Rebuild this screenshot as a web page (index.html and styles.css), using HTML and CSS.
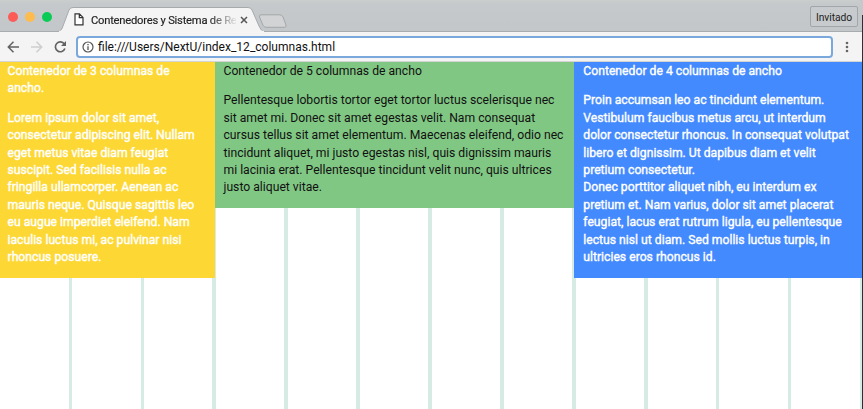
FILE: index.html
```html
<!DOCTYPE html>
<html lang="es">
<head>
<meta charset="utf-8">
<title>Contenedores y Sistema de Rejillas</title>
<link rel="stylesheet" href="styles.css">
</head>
<body>
<div class="window">
  <header class="tabbar">
    <div class="lights"><i class="red"></i><i class="amber"></i><i class="green"></i></div>
    <div class="tab">
      <svg class="tab-shape" width="210" height="25" viewBox="0 0 210 25"><path d="M0 24.5C3 24 4 22 5 19L11 3Q12 .5 15 .5H190Q193 .5 194 3L201 19Q203 24 206 24.5V25H0Z" fill="#f4f4f4" stroke="#a7aaab" stroke-width="1"/><path d="M1 24.5H206" stroke="#f4f4f4" stroke-width="1.5"/></svg>
      <svg class="page" width="10" height="13" viewBox="0 0 10 13"><path d="M1 .8H5.4L9 4.4V11.8H1ZM5.3 1V4.6H9" fill="#fff" stroke="#333" stroke-width="1.2"/></svg>
      <span class="tab-title">Contenedores y Sistema de Re</span>
      <svg class="close" width="8" height="8" viewBox="0 0 8 8"><path d="M1 1L7 7M7 1L1 7" stroke="#555" stroke-width="1.5"/></svg>
    </div>
    <svg class="new-tab" width="30" height="15" viewBox="0 0 30 15"><path d="M3 .8H22Q24 .8 25 3L28 11Q28.5 13.3 26.5 13.3H8Q6 13.3 5 11.3L1.5 3Q1 .8 3 .8Z" fill="#d1d3d4" stroke="#a4a7a9"/></svg>
    <button class="guest">Invitado</button>
  </header>
  <nav class="toolbar">
    <svg class="nav-icons" width="76" height="30" viewBox="0 0 76 30" fill="none" stroke-width="1.5"><path d="M19 15H8.500M13.500 9.700L8.300 15L13.500 20.300" stroke="#626262"/><path d="M31 15H41.500M36.500 9.700L41.700 15L36.500 20.300" stroke="#cecece"/><path d="M64.300 12A4.900 4.900 0 1 0 64.900 16.500" stroke="#626262" stroke-width="1.700"/><path d="M66 9V14H61Z" fill="#626262"/></svg>
    <div class="address">
      <svg width="12" height="12" viewBox="0 0 12 12"><circle cx="6" cy="6" r="5" fill="none" stroke="#555" stroke-width="1.2"/><path d="M6 5.200V9M6 3V4.300" stroke="#555" stroke-width="1.3"/></svg>
      <span>file:///Users/NextU/index_12_columnas.html</span>
    </div>
    <svg class="menu" width="4" height="14" viewBox="0 0 4 14" fill="#666"><circle cx="2" cy="3" r="1.3"/><circle cx="2" cy="7" r="1.3"/><circle cx="2" cy="11" r="1.3"/></svg>
  </nav>
  <main class="grid">
    <section class="col three">
      <p>Contenedor de 3 columnas de<br>ancho.</p>
      <p>Lorem ipsum dolor sit amet,<br>consectetur adipiscing elit. Nullam<br>eget metus vitae diam feugiat<br>suscipit. Sed facilisis nulla ac<br>fringilla ullamcorper. Aenean ac<br>mauris neque. Quisque sagittis leo<br>eu augue imperdiet eleifend. Nam<br>iaculis luctus mi, ac pulvinar nisi<br>rhoncus posuere.</p>
    </section>
    <section class="col five">
      <p>Contenedor de 5 columnas de ancho</p>
      <p>Pellentesque lobortis tortor eget tortor luctus scelerisque nec<br>sit amet mi. Donec sit amet egestas velit. Nam consequat<br>cursus tellus sit amet elementum. Maecenas eleifend, odio nec<br>tincidunt aliquet, mi justo egestas nisl, quis dignissim mauris<br>mi lacinia erat. Pellentesque tincidunt velit nunc, quis ultrices<br>justo aliquet vitae.</p>
    </section>
    <section class="col four">
      <p>Contenedor de 4 columnas de ancho</p>
      <p>Proin accumsan leo ac tincidunt elementum.<br>Vestibulum faucibus metus arcu, ut interdum<br>dolor consectetur rhoncus. In consequat volutpat<br>libero et dignissim. Ut dapibus diam et velit<br>pretium consectetur.<br>Donec porttitor aliquet nibh, eu interdum ex<br>pretium et. Nam varius, dolor sit amet placerat<br>feugiat, lacus erat rutrum ligula, eu pellentesque<br>lectus nisl ut diam. Sed mollis luctus turpis, in<br>ultricies eros rhoncus id.</p>
    </section>
  </main>
</div>
</body>
</html>
```
FILE: styles.css
```css
* { box-sizing: border-box; }
body { margin: 0; background: #fff; font-family: Roboto, sans-serif; overflow: hidden; }
.window { height: 409px; display: flex; flex-direction: column; background: linear-gradient(#263238, #263238) 862px 15px / 1px 394px no-repeat #c5c8ca; }
.tabbar { height: 32px; display: flex; align-items: flex-start; background: linear-gradient(#cbcecd, #c5c9cb 4px, #c3c7c9); border-bottom: 1px solid #a9acad; border-radius: 0 5px 0 0; margin-right: 1px; }
.lights { display: flex; gap: 7px; padding: 12px 0 0 8px; width: 58px; }
.lights i { width: 10px; height: 10px; border-radius: 50%; flex: none; }
.red { background: #fc5b57; }
.amber { background: #fdbc4d; }
.green { background: #0acb55; }
.tab { width: 206px; height: 25px; margin-top: 7px; position: relative; display: flex; align-items: center; padding-left: 16px; flex: none; }
.tab-shape { position: absolute; left: 0; top: 0; }
.page, .tab-title, .close { position: relative; flex: none; }
.tab-title { width: 145px; margin-left: 7px; white-space: nowrap; font-size: 11.2px; letter-spacing: -.22px; line-height: 16px; top: 1px; color: #222; -webkit-text-stroke: .15px #222; -webkit-mask-image: linear-gradient(90deg, #000 118px, transparent 147px); mask-image: linear-gradient(90deg, #000 118px, transparent 147px); }
.close { margin-left: 4px; }
.new-tab { margin: 14px 0 0 -6px; position: relative; }
.guest { margin: 6px 4px 0 auto; width: 48px; height: 21px; padding: 1px 0 0; border: 1px solid #a3a6a8; border-radius: 2px; background: #c8cbcd; font: 10.3px Roboto, sans-serif; letter-spacing: -.1px; color: #222; }
.toolbar { height: 30px; display: flex; align-items: center; background: #f4f4f4; border-bottom: 1px solid #d4d4d4; margin-right: 1px; }
.nav-icons { flex: none; }
.address { width: 757px; height: 22px; display: flex; align-items: center; gap: 4.5px; padding-left: 3.5px; border: 2px solid #7ba8dc; border-radius: 4px; background: #fff; font-size: 12.03px; color: #111; }
.menu { margin-left: 12px; }
.grid { width: 862px; flex: 1; display: grid; grid-template-columns: 215px 359.3px 1fr; align-items: start; background: repeating-linear-gradient(90deg, #fff 0 68.6px, #d5ebe3 68.6px 71.95px); }
.col { padding: .7px 8px 11.5px; font-size: 12.2px; line-height: 17.42px; white-space: nowrap; }
.col p { margin: 0 0 12.2px; }
.col p:last-child { margin-bottom: 0; }
.three { background: #fdd835; color: #fff; -webkit-text-stroke: .35px #fff; padding-left: 7.5px; }
.five { background: #81c784; color: #111; padding-left: 8.5px; font-size: 12.18px; }
.four { background: #448aff; color: #fff; -webkit-text-stroke: .35px #fff; padding-left: 9px; }
```
